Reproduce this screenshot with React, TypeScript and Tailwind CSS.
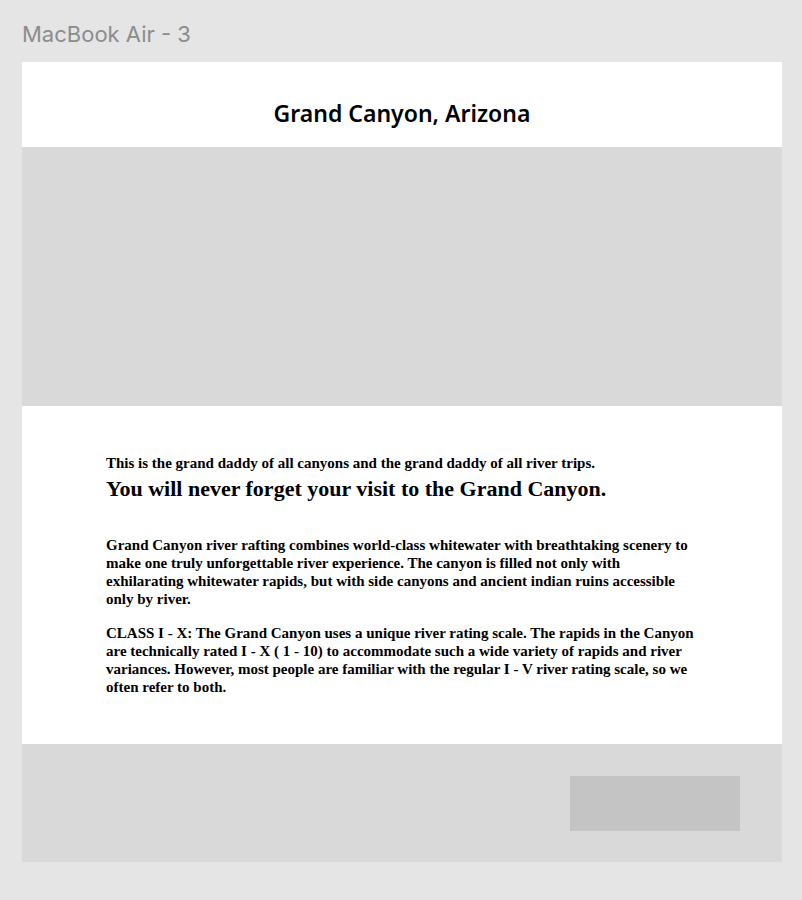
export default function App() {
  return (
    <div className="min-h-[900px] bg-[#e5e5e5] pt-[19px]">
      <p className="ml-[22px] text-[22px] leading-[30px] text-[#8c8c8c] font-['Inter',sans-serif]">MacBook Air - 3</p>

      <div className="ml-[22px] mt-[13px] w-[760px] bg-white">
        {/* Header */}
        <header className="h-[85px] flex items-center justify-center pt-[18px]">
          <h1 className="text-[23px] font-semibold text-black font-['Noto_Sans',sans-serif]">Grand Canyon, Arizona</h1>
        </header>

        {/* Hero placeholder */}
        <div className="h-[259px] bg-[#d9d9d9]" />

        {/* Content */}
        <main className="h-[338px] pl-[84px] pr-[60px] pt-[48px] font-['Liberation_Serif',serif] font-bold text-black">
          <p className="text-[15px] leading-[18px]">This is the grand daddy of all canyons and the grand daddy of all river trips.</p>
          <h2 className="text-[22px] leading-[30px] mt-[2px]">You will never forget your visit to the Grand Canyon.</h2>

          <p className="mt-[32px] text-[15px] leading-[18px] max-w-[591px]">
            Grand Canyon river rafting combines world-class whitewater with breathtaking scenery to make one truly unforgettable river experience. The canyon is filled not only with exhilarating whitewater rapids, but with side canyons and ancient indian ruins accessible only by river.
          </p>
          <p className="mt-[16px] text-[15px] leading-[18px] max-w-[591px]">
            CLASS I - X: The Grand Canyon uses a unique river rating scale. The rapids in the Canyon are technically rated I - X ( 1 - 10) to accommodate such a wide variety of rapids and river variances. However, most people are familiar with the regular I - V river rating scale, so we often refer to both.
          </p>
        </main>

        {/* Footer */}
        <footer className="h-[118px] bg-[#d9d9d9] flex justify-end items-start pt-[32px] pr-[42px]">
          <div className="w-[170px] h-[55px] bg-[#c4c4c4]" />
        </footer>
      </div>
    </div>
  );
}
